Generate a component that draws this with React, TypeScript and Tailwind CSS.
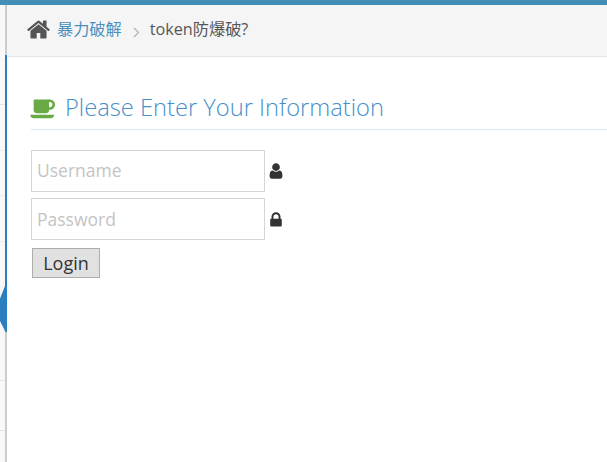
function HomeIcon() {
  return (
    <svg viewBox="0 0 1792 1792" className="w-[25px] h-[25px] shrink-0 text-[#555555]" fill="currentColor">
      <path d="M1472 992v480q0 26-19 45t-45 19h-384v-384h-256v384h-384q-26 0-45-19t-19-45v-480q0-1 .5-3t.5-3l575-474 575 474q1 2 1 6zm223-69l-62 74q-8 9-21 11h-3q-13 0-21-7l-692-577-692 577q-12 8-24 7-13-2-21-11l-62-74q-8-10-7-23.5t11-21.5l719-599q32-26 76-26t76 26l244 204v-195q0-14 9-23t23-9h192q14 0 23 9t9 23v408l219 182q10 8 11 21.5t-7 23.5z" />
    </svg>
  );
}

function CoffeeIcon() {
  return (
    <svg viewBox="-64 0 1984 1792" className="w-[27px] h-[24px] shrink-0 text-[#69aa46]" fill="currentColor">
      <path d="M1600 640q0-80-56-136t-136-56h-64v384h64q80 0 136-56t56-136zm-1664 768h1792q0 106-75 181t-181 75h-1280q-106 0-181-75t-75-181zm1856-768q0 159-112.5 271.5t-271.5 112.5h-64v32q0 92-66 158t-158 66h-704q-92 0-158-66t-66-158v-736q0-26 19-45t45-19h1152q159 0 271.5 112.5t112.5 271.5z" />
    </svg>
  );
}

function UserIcon() {
  return (
    <svg viewBox="0 0 1792 1792" className="ml-[2px] w-[18px] h-[18px] shrink-0 text-[#333333]" fill="currentColor">
      <path d="M1536 1399q0 109-62.5 187t-150.5 78h-854q-88 0-150.5-78t-62.5-187q0-85 8.5-160.5t31.5-151.5 58.5-130 94-88.5 134.5-34.5q131 128 313 128t313-128q76 0 134.5 34.5t94 88.5 58.5 130 31.5 151.5 8.5 160.5zm-256-887q0 159-112.5 271.5t-271.5 112.5-271.5-112.5-112.5-271.5 112.5-271.5 271.5-112.5 271.5 112.5 112.5 271.5z" />
    </svg>
  );
}

function LockIcon() {
  return (
    <svg viewBox="0 0 1792 1792" className="ml-[2px] mt-[1px] w-[18px] h-[18px] shrink-0 text-[#333333]" fill="currentColor">
      <path d="M640 768h512v-192q0-106-75-181t-181-75-181 75-75 181v192zm832 96v576q0 40-28 68t-68 28h-960q-40 0-68-28t-28-68v-576q0-40 28-68t68-28h32v-192q0-184 132-316t316-132 316 132 132 316v192h32q40 0 68 28t28 68z" />
    </svg>
  );
}

const faintRows = [0, 1, 2, 3];

function Sidebar() {
  return (
    <div className="w-[7px] shrink-0 flex flex-col bg-[#f8f8f8]">
      <div className="h-[50px] border-r-2 border-[#cccccc]" />
      <div className="h-[277px] border-r-2 border-[#2a7fc0] relative">
        <div className="h-[50px] border-b border-[#e5e5e5]" />
        {faintRows.map((d) => (
          <div key={d} className="h-[45.5px] border-b border-dotted border-[#e8e8e8]" />
        ))}
        <div className="absolute left-0 top-[231px] w-[5px] h-[45px] bg-[#2a7fc0] [clip-path:polygon(100%_0,0_28%,0_78%,100%_100%)]" />
      </div>
      <div className="flex-1 border-r-2 border-[#cccccc]">
        <div className="h-[49px] border-b border-[#e5e5e5]" />
        <div className="h-[50px] border-b border-[#e5e5e5]" />
      </div>
    </div>
  );
}

export default function App() {
  return (
    <div className="w-[607px] h-[462px] overflow-hidden bg-white flex flex-col font-['Open_Sans','Noto_Sans_CJK_SC',sans-serif]">
      <div className="h-[5px] shrink-0 bg-[#438eb9]" />
      <div className="flex flex-1 min-h-0">
        <Sidebar />
        <div className="flex-1 min-w-0">
          <div className="h-[52px] bg-[#f5f5f5] border-b border-[#e5e5e5] flex items-center pl-[19px] pb-[2px] text-[16.2px]">
            <HomeIcon />
            <a className="ml-[6px] text-[#4c8fbd]">暴力破解</a>
            <svg viewBox="0 0 7 11" className="ml-[11px] mt-[5px] w-[7px] h-[11px] shrink-0 text-[#b2b6bf]" fill="none" stroke="currentColor" strokeWidth="1.4">
              <path d="M1 1l4.5 4.5L1 10" />
            </svg>
            <span className="ml-[10px] text-[#555555]">token防爆破?</span>
          </div>
          <div className="pl-[24px]">
            <div className="mt-[35px] h-[38px] border-b border-[#dce8f1] flex items-center pb-[5px]">
              <div className="-ml-[1px]">
                <CoffeeIcon />
              </div>
              <h1 className="ml-[8px] text-[23.7px] font-light text-[#478fca]">Please Enter Your Information</h1>
            </div>
            <div className="mt-[20px] flex items-center h-[42px]">
              <input placeholder="Username" className="w-[234px] h-[42px] border border-[#d5d5d5] pl-[5px] pb-[2px] text-[17.5px] placeholder:text-[#c4c4c4] outline-none" />
              <UserIcon />
            </div>
            <div className="mt-[6px] flex items-center h-[42px]">
              <input placeholder="Password" className="w-[234px] h-[42px] border border-[#d5d5d5] pl-[5px] text-[17.5px] placeholder:text-[#c4c4c4] outline-none" />
              <LockIcon />
            </div>
            <button className="mt-[8px] ml-[1px] w-[68px] h-[30px] bg-[#e1e1e1] border border-[#adadad] text-[18px] text-[#333333] leading-none">Login</button>
          </div>
        </div>
      </div>
    </div>
  );
}
